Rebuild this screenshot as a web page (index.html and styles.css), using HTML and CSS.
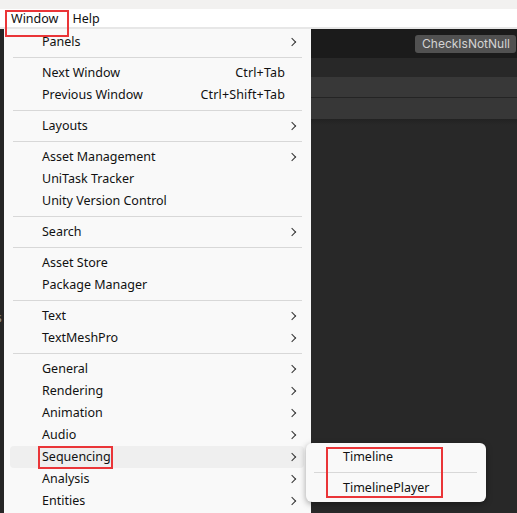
FILE: index.html
```html
<!DOCTYPE html>
<html>
<head>
<meta charset="utf-8">
<link rel="stylesheet" href="styles.css">
</head>
<body>
<div class="topstrip"></div>
<div class="menubar">
  <span class="mb-item mb-window">Window</span>
  <span class="mb-item">Help</span>
</div>
<div class="menubar-line"></div>
<div class="workspace">
  <div class="leftpane"><span class="cut">s</span></div>
  <div class="editor">
    <div class="toolbar"><span class="btn">CheckIsNotNull</span></div>
    <div class="band band1"></div>
    <div class="band band2"></div>
    <div class="band band3"></div>
    <div class="band band4"></div>
  </div>
</div>

<div class="menu">
  <div class="item"><span class="label">Panels</span><span class="arrow"></span></div>
  <div class="sep"></div>
  <div class="item"><span class="label">Next Window</span><span class="key">Ctrl+Tab</span><span class="arrow none"></span></div>
  <div class="item"><span class="label">Previous Window</span><span class="key">Ctrl+Shift+Tab</span><span class="arrow none"></span></div>
  <div class="sep"></div>
  <div class="item"><span class="label">Layouts</span><span class="arrow"></span></div>
  <div class="sep"></div>
  <div class="item"><span class="label">Asset Management</span><span class="arrow"></span></div>
  <div class="item"><span class="label">UniTask Tracker</span><span class="arrow none"></span></div>
  <div class="item"><span class="label">Unity Version Control</span><span class="arrow none"></span></div>
  <div class="sep"></div>
  <div class="item"><span class="label">Search</span><span class="arrow"></span></div>
  <div class="sep"></div>
  <div class="item"><span class="label">Asset Store</span><span class="arrow none"></span></div>
  <div class="item"><span class="label">Package Manager</span><span class="arrow none"></span></div>
  <div class="sep"></div>
  <div class="item"><span class="label">Text</span><span class="arrow"></span></div>
  <div class="item"><span class="label">TextMeshPro</span><span class="arrow"></span></div>
  <div class="sep"></div>
  <div class="item"><span class="label">General</span><span class="arrow"></span></div>
  <div class="item"><span class="label">Rendering</span><span class="arrow"></span></div>
  <div class="item"><span class="label">Animation</span><span class="arrow"></span></div>
  <div class="item"><span class="label">Audio</span><span class="arrow"></span></div>
  <div class="item active"><span class="label">Sequencing</span><span class="arrow"></span></div>
  <div class="item"><span class="label">Analysis</span><span class="arrow"></span></div>
  <div class="item"><span class="label">Entities</span><span class="arrow"></span></div>
</div>

<div class="submenu">
  <div class="sub-item">Timeline</div>
  <div class="sub-sep"></div>
  <div class="sub-item">TimelinePlayer</div>
</div>

<div class="mark mark-window"></div>
<div class="mark mark-seq"></div>
<div class="mark mark-sub"></div>
</body>
</html>
```

FILE: styles.css
```css
html, body {
  margin: 0;
  padding: 0;
  width: 517px;
  height: 513px;
  overflow: hidden;
  background: #282828;
  font-family: "Noto Sans", "Open Sans", sans-serif;
  color: #111111;
}

.topstrip {
  height: 9px;
  background: #f2f1f0;
}

.menubar {
  height: 18px;
  box-sizing: border-box;
  padding: 2px 0 0 11px;
  background: #ffffff;
  display: flex;
  align-items: center;
  gap: 14px;
  font-size: 12.5px;
}

.mb-item {
  line-height: 16px;
}

.menubar-line {
  height: 2px;
  background: #e7e7e7;
}

.workspace {
  display: flex;
  height: 484px;
}

.leftpane {
  width: 4px;
  background: #262626;
  position: relative;
  overflow: hidden;
}

.cut {
  position: absolute;
  top: 280px;
  left: -4px;
  color: #9a9a9a;
  font-size: 12px;
}

.editor {
  flex: 1;
  display: flex;
  flex-direction: column;
}

.toolbar {
  height: 29px;
  background: #1b1b1b;
  display: flex;
  align-items: center;
  justify-content: flex-end;
  padding-right: 0;
}

.btn {
  background: #515151;
  color: #d4d4d4;
  font-family: Inter, "Noto Sans", sans-serif;
  font-size: 12px;
  height: 18px;
  line-height: 18px;
  padding: 0 6px 0 7px;
  margin-right: 1px;
  border-radius: 3px;
}

.band1 { height: 19px; background: #282828; }
.band2 { height: 20px; background: #383838; border-bottom: 1px solid #242424; }
.band3 { height: 21px; background: #373737; }
.band4 { flex: 1; background: linear-gradient(#222222, #282828 6px); }

.menu {
  position: absolute;
  left: 4px;
  top: 29px;
  width: 307px;
  height: 484px;
  background: #f9f9f9;
  padding-top: 2px;
  box-sizing: border-box;
  font-size: 12.5px;
}

.item {
  display: flex;
  align-items: center;
  height: 22px;
  box-sizing: border-box;
  margin: 0 7px 0 6px;
  padding: 0 5px 2px 32px;
  border-radius: 4px;
}

.item.active {
  background: #efefef;
}

.label {
  flex: 1;
  white-space: nowrap;
}

.key {
  margin-right: 2px;
  white-space: nowrap;
  letter-spacing: 0.15px;
}

.arrow {
  width: 12px;
  height: 20px;
  position: relative;
}

.arrow::after {
  content: "";
  position: absolute;
  left: 2px;
  top: 8px;
  width: 5px;
  height: 5px;
  border-right: 1.4px solid #333;
  border-top: 1.4px solid #333;
  transform: rotate(45deg);
}

.arrow.none::after {
  display: none;
}

.sep {
  height: 1px;
  background: #d8d8d8;
  margin: 4px 9px;
}

.submenu {
  position: absolute;
  left: 306px;
  top: 443px;
  width: 180px;
  height: 59px;
  box-sizing: border-box;
  padding: 3px 0;
  background: #f9f9f9;
  border-radius: 6px;
  box-shadow: 0 2px 6px rgba(0, 0, 0, 0.35);
  font-size: 12.5px;
}

.sub-item {
  height: 22px;
  line-height: 21px;
  padding-left: 37px;
}

.sub-sep {
  height: 1px;
  background: #d8d8d8;
  margin: 4px 9px 4px 8px;
}

.mark {
  position: absolute;
  border: 2px solid #ea3538;
  box-sizing: border-box;
}

.mark-window { left: 5px; top: 10px; width: 64px; height: 27px; }
.mark-seq { left: 38px; top: 446px; width: 75px; height: 23px; }
.mark-sub { left: 326px; top: 447px; width: 117px; height: 51px; }
```
